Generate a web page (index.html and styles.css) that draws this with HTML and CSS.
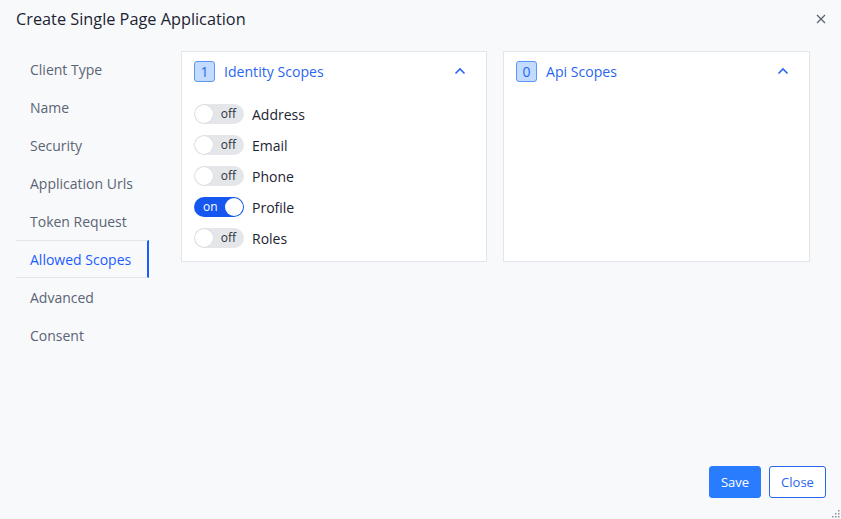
FILE: index.html
```html
<!DOCTYPE html>
<html>
<head>
<meta charset="utf-8">
<link rel="stylesheet" href="styles.css">
</head>
<body>
<div class="dialog">
  <header class="header">
    <h1 class="title">Create Single Page Application</h1>
    <button class="close-x" aria-label="close">
      <svg width="10" height="10" viewBox="0 0 10 10"><path d="M1 1L9 9M9 1L1 9" stroke="#5b6270" stroke-width="1.3" fill="none"/></svg>
    </button>
  </header>
  <div class="body">
    <nav class="nav">
      <div class="nav-item">Client Type</div>
      <div class="nav-item">Name</div>
      <div class="nav-item">Security</div>
      <div class="nav-item">Application Urls</div>
      <div class="nav-item">Token Request</div>
      <div class="nav-item active">Allowed Scopes</div>
      <div class="nav-item">Advanced</div>
      <div class="nav-item">Consent</div>
    </nav>
    <section class="cards">
      <div class="card">
        <div class="card-head">
          <span class="badge">1</span>
          <span class="card-title">Identity Scopes</span>
          <svg class="chev" width="12" height="8" viewBox="0 0 12 8"><path d="M1.5 6.5L6 2L10.5 6.5" stroke="#2a66f0" stroke-width="1.6" fill="none"/></svg>
        </div>
        <div class="rows">
          <div class="row"><span class="toggle"><span class="knob"></span><span class="tlabel">off</span></span><span class="rlabel">Address</span></div>
          <div class="row"><span class="toggle"><span class="knob"></span><span class="tlabel">off</span></span><span class="rlabel">Email</span></div>
          <div class="row"><span class="toggle"><span class="knob"></span><span class="tlabel">off</span></span><span class="rlabel">Phone</span></div>
          <div class="row"><span class="toggle on"><span class="tlabel">on</span><span class="knob"></span></span><span class="rlabel">Profile</span></div>
          <div class="row"><span class="toggle"><span class="knob"></span><span class="tlabel">off</span></span><span class="rlabel">Roles</span></div>
        </div>
      </div>
      <div class="card">
        <div class="card-head">
          <span class="badge">0</span>
          <span class="card-title">Api Scopes</span>
          <svg class="chev" width="12" height="8" viewBox="0 0 12 8"><path d="M1.5 6.5L6 2L10.5 6.5" stroke="#2a66f0" stroke-width="1.6" fill="none"/></svg>
        </div>
      </div>
    </section>
  </div>
  <footer class="footer">
    <button class="btn primary">Save</button>
    <button class="btn outline">Close</button>
  </footer>
  <svg class="grip" width="10" height="10" viewBox="0 0 10 10">
    <rect x="8" y="2" width="1.5" height="1.5" fill="#8a909a"/>
    <rect x="5" y="5" width="1.5" height="1.5" fill="#8a909a"/>
    <rect x="8" y="5" width="1.5" height="1.5" fill="#8a909a"/>
    <rect x="2" y="8" width="1.5" height="1.5" fill="#8a909a"/>
    <rect x="5" y="8" width="1.5" height="1.5" fill="#8a909a"/>
    <rect x="8" y="8" width="1.5" height="1.5" fill="#8a909a"/>
  </svg>
</div>
</body>
</html>
```
FILE: styles.css
```css
* { box-sizing: border-box; }
html, body { margin: 0; padding: 0; }
body {
  background: #f8f9fb;
  font-family: "Open Sans", "Noto Sans", sans-serif;
  color: #1c2433;
}
.dialog {
  position: relative;
  height: 519px;
  display: flex;
  flex-direction: column;
}
.header {
  height: 38px;
  display: flex;
  align-items: center;
  justify-content: space-between;
  padding: 0 14px 0 16px;
}
.title {
  margin: 0;
  font-size: 16.3px;
  font-weight: 400;
  color: #1c2433;
}
.close-x {
  border: 0;
  background: none;
  padding: 0;
  width: 12px;
  height: 12px;
  display: flex;
  align-items: center;
  justify-content: center;
}
.body {
  display: flex;
  padding-top: 13px;
  flex: 1;
}
.nav {
  margin-left: 16px;
  margin-top: -1px;
  width: 133px;
  display: flex;
  flex-direction: column;
}
.nav-item {
  height: 38px;
  display: flex;
  align-items: center;
  padding-left: 14px;
  font-size: 14px;
  color: #5b6474;
}
.nav-item.active {
  color: #1a5cff;
  border-top: 1px solid #e2e5ea;
  border-bottom: 1px solid #e2e5ea;
  border-right: 2px solid #1a5cff;
}
.cards {
  display: flex;
  gap: 16px;
  margin-left: 32px;
  align-items: flex-start;
}
.card {
  width: 306px;
  height: 211px;
  background: #fff;
  border: 1px solid #e2e5ea;
  padding: 8px 12px 12px 12px;
}
.card + .card { width: 307px; }
.card-head {
  display: flex;
  align-items: center;
  height: 22px;
}
.badge {
  width: 21px;
  height: 21px;
  border: 1px solid #5b97f7;
  background: #c2dbff;
  border-radius: 3px;
  color: #2a66f0;
  font-size: 14px;
  display: flex;
  align-items: center;
  justify-content: center;
}
.card-title {
  margin-left: 9px;
  font-size: 14.1px;
  color: #2a66f0;
  flex: 1;
}
.chev { margin-right: 8px; }
.rows {
  margin-top: 22px;
  display: flex;
  flex-direction: column;
  gap: 11px;
}
.row {
  display: flex;
  align-items: center;
  height: 20px;
}
.toggle {
  width: 50px;
  height: 20px;
  border-radius: 10px;
  background: #e4e6ea;
  display: flex;
  align-items: center;
  justify-content: space-between;
  padding: 0 8px 0 1px;
}
.knob {
  width: 18px;
  height: 18px;
  border-radius: 50%;
  background: #fff;
  box-shadow: 0 0 0 0.5px #d5d8de;
}
.tlabel {
  font-size: 12px;
  color: #2b3240;
  line-height: 1;
  margin-top: -1px;
}
.toggle.on {
  background: #1657f0;
  padding: 0 1px 0 9px;
}
.toggle.on .tlabel { color: #fff; }
.toggle.on .knob { box-shadow: none; }
.rlabel {
  margin-left: 8px;
  font-size: 14px;
  color: #1c2433;
}
.footer {
  display: flex;
  justify-content: flex-end;
  gap: 8px;
  padding: 0 15px 21px 0;
}
.btn {
  height: 32px;
  border-radius: 3px;
  font-family: "Open Sans", "Noto Sans", sans-serif;
  font-size: 13px;
  padding: 0;
}
.btn.primary {
  width: 52px;
  background: #2a7cff;
  border: 1px solid #2a7cff;
  color: #fff;
}
.btn.outline {
  width: 57px;
  background: #fff;
  border: 1px solid #2a66f0;
  color: #2a66f0;
}
.grip {
  position: absolute;
  right: 1px;
  bottom: 1px;
}
```
